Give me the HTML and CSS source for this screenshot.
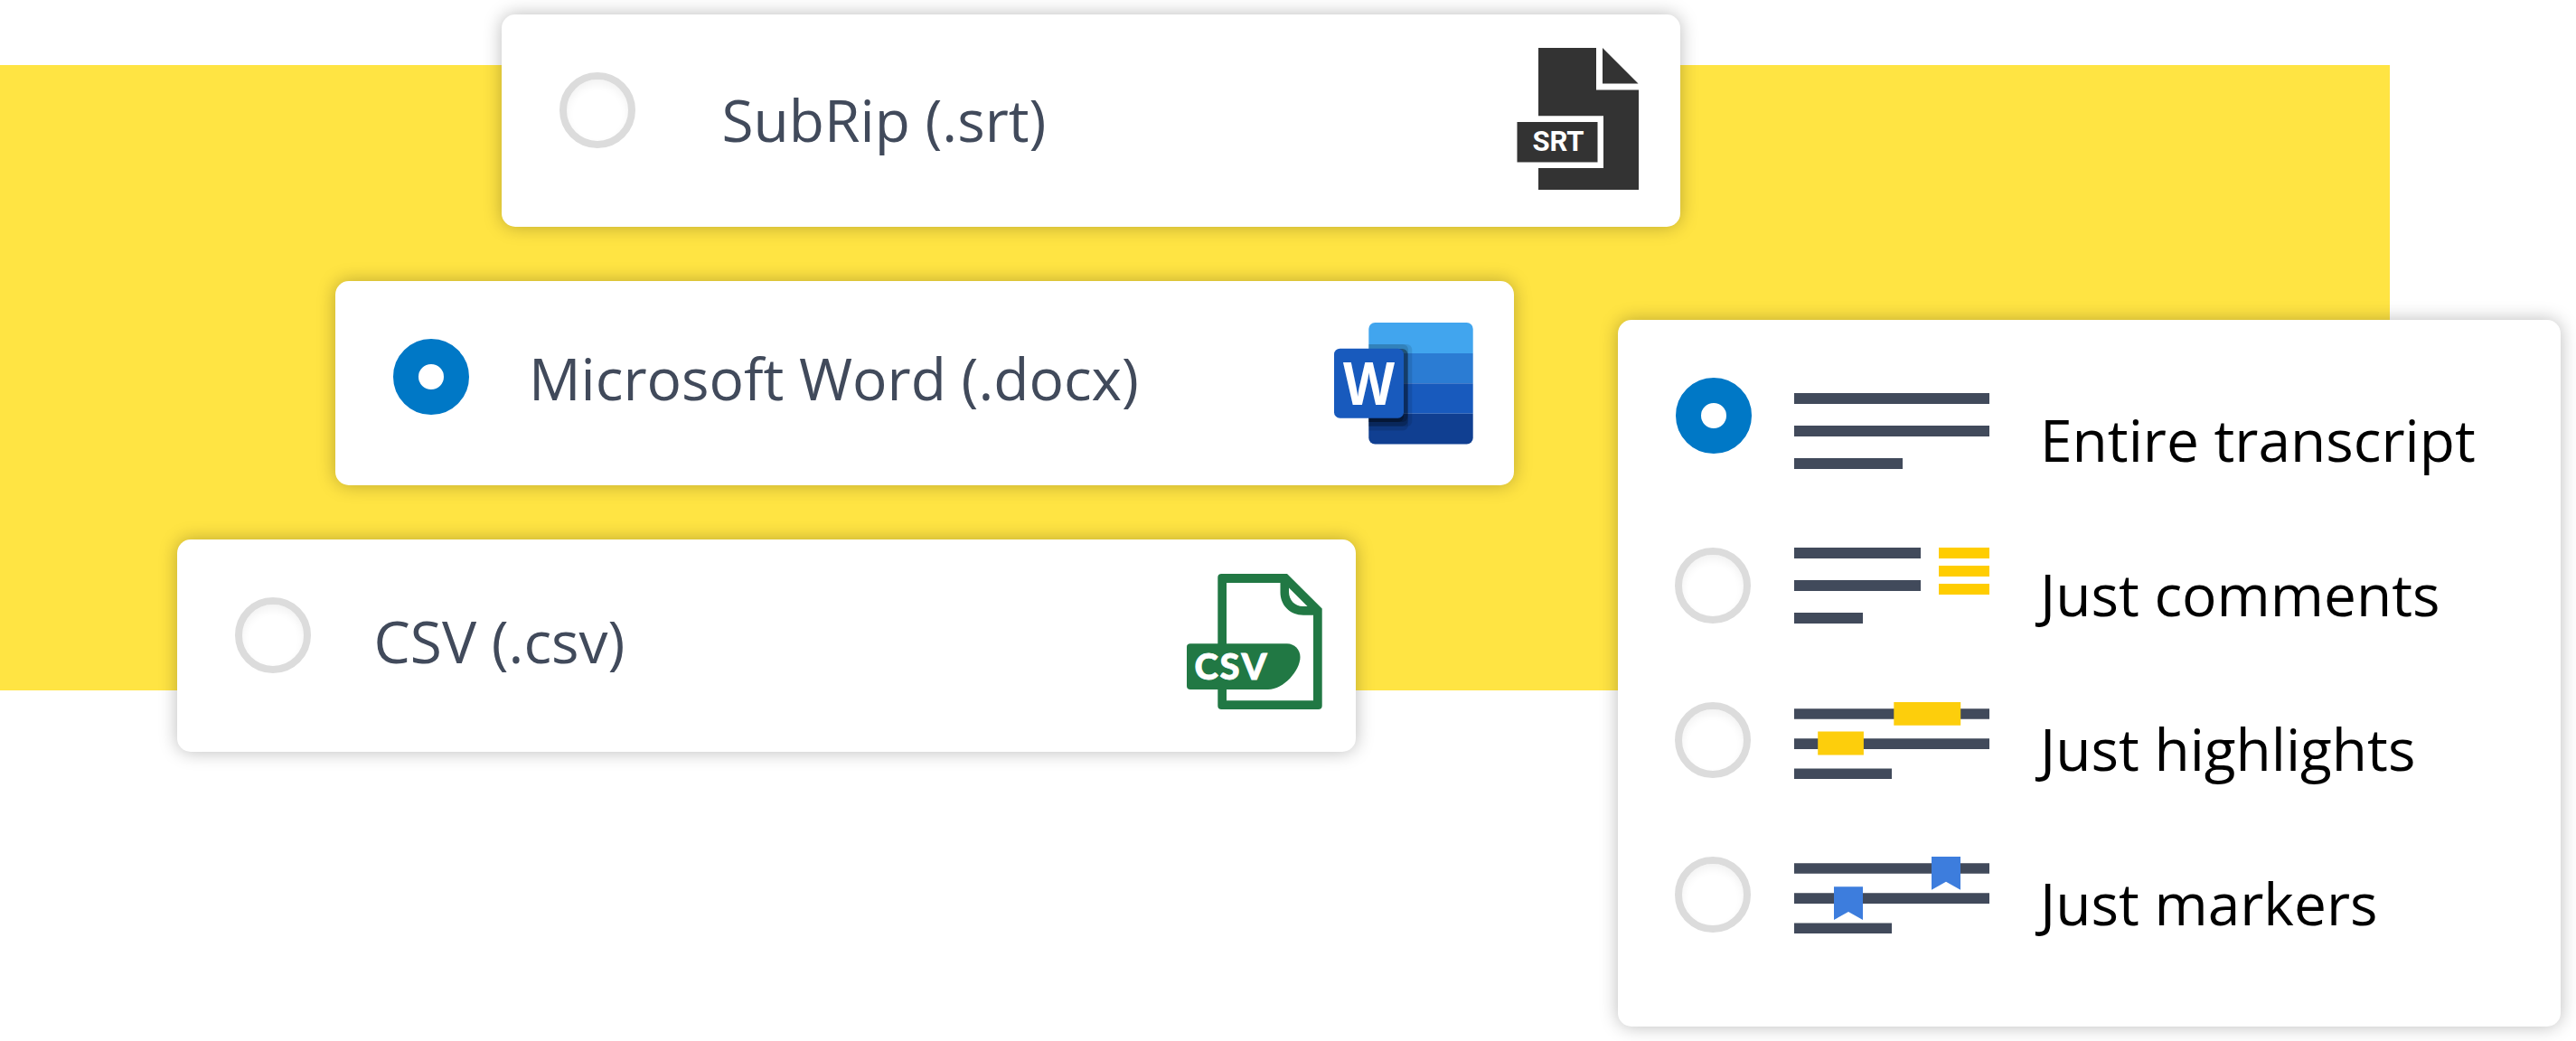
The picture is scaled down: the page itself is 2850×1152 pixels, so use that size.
FILE: index.html
```html
<!DOCTYPE html>
<html lang="en">
<head>
<meta charset="utf-8">
<title>Export options</title>
<link rel="stylesheet" href="styles.css">
</head>
<body>
<main class="stage">
  <div class="band"></div>
  <section class="formats">
    <div class="card card-srt">
      <span class="radio"></span>
      <span class="label">SubRip (.srt)</span>
      <svg class="file-icon" width="135" height="157" viewBox="0 0 135 157">
        <g fill="#333">
          <path d="M24 0H88V46.500H135V157H24V133H96V75.300H24Z"/>
          <path d="M95 0L134.500 39.500H95Z"/>
          <path d="M.5 82H89.500V126.500H.5Z"/>
        </g>
        <text class="srt-text" x="17.500" y="114" textLength="57" lengthAdjust="spacing">SRT</text>
      </svg>
    </div>
    <div class="card card-word">
      <span class="radio checked"></span>
      <span class="label">Microsoft Word (.docx)</span>
      <svg class="file-icon" width="154" height="135" viewBox="0 0 154 135">
        <defs><clipPath id="book"><rect x="38.300" width="115.400" height="134.500" rx="7"/></clipPath></defs>
        <g clip-path="url(#book)">
          <path fill="#41a5ee" d="M38 0h116v34H38z"/>
          <path fill="#2b7cd3" d="M38 34h116v33.300H38z"/>
          <path fill="#185abd" d="M38 67.300h116v33.400H38z"/>
          <path fill="#103f91" d="M38 100.700h116V135H38z"/>
          <rect x="9" y="24" width="77.300" height="91" rx="6" opacity=".1"/>
          <rect x="9" y="24" width="73" height="95.500" rx="6" opacity=".12"/>
          <rect x="5" y="29" width="76.500" height="85.500" rx="6" opacity=".2"/>
          <rect x="5" y="29" width="76.500" height="81" rx="6" opacity=".2"/>
          <rect x="3" y="29" width="74" height="81" rx="6" opacity=".25"/>
        </g>
        <rect y="28.700" width="77" height="77" rx="6.500" fill="#185abd"/>
        <text class="word-text" x="10" y="91" textLength="57" lengthAdjust="spacingAndGlyphs">W</text>
      </svg>
    </div>
    <div class="card card-csv">
      <span class="radio"></span>
      <span class="label">CSV (.csv)</span>
      <svg class="file-icon" width="150" height="150" viewBox="0 0 150 150">
        <path fill="#217844" fill-rule="evenodd" d="M38.500 0H111L149.700 38.500V146Q149.700 150 145.500 150H38.500Q34.300 150 34.300 146V4Q34.300 0 38.500 0ZM44 10V140.300H140V45.700H129C114 45.700 103.500 34.500 103.500 20.500V10ZM113 15.500V20C113 29 119.500 36 128.500 36H133.500Z"/>
        <path fill="#217844" d="M4 77.300H111C119 77.300 125.500 84 125.500 92C125.500 107 107 128 90 128H4Q0 128 0 124V81Q0 77.300 4 77.300Z"/>
        <text class="csv-text" x="8.500 36.500 60.500" y="117">CSV</text>
      </svg>
    </div>
  </section>
  <section class="panel">
    <div class="option first">
      <span class="radio checked"></span>
      <svg class="lines" width="216" height="98" fill="#414a5b"><path d="M0 0h216v12H0zM0 36h216v12H0zM0 72h120v12H0z"/></svg>
      <span class="label">Entire transcript</span>
    </div>
    <div class="option">
      <span class="radio"></span>
      <svg class="lines" width="216" height="98" fill="#414a5b"><path d="M0 0h140v12H0zM0 36h140v12H0zM0 72h76v12H0z"/><path fill="#ffcd00" d="M160 0h56v12h-56zM160 20h56v12h-56zM160 40h56v12h-56z"/></svg>
      <span class="label">Just comments</span>
    </div>
    <div class="option">
      <span class="radio"></span>
      <svg class="lines" width="216" height="98" fill="#414a5b"><path d="M0 7.200h216v11.600H0zM0 40.300h216v11.600H0zM0 73.500h108V85H0z"/><path fill="#fdce0c" d="M110.300 0h73.900v25.800h-73.900zM26.200 32.400h50.700v26.200H26.200z"/></svg>
      <span class="label">Just highlights</span>
    </div>
    <div class="option">
      <span class="radio"></span>
      <svg class="lines" width="216" height="98" fill="#414a5b"><path d="M0 7.200h216v11.600H0zM0 40.300h216v11.600H0zM0 73.500h108V85H0z"/><path fill="#3d7ddd" d="M152 0h32v36.800l-16-9-16 9zM44 33.200h32V70l-16-9-16 9z"/></svg>
      <span class="label">Just markers</span>
    </div>
  </section>
</main>
</body>
</html>
```

FILE: styles.css
```css
* { box-sizing: border-box; }

body {
  margin: 0;
  background: #fff;
  font-family: "Open Sans", "Noto Sans", sans-serif;
}

.stage {
  position: relative;
  display: flex;
  width: 2850px;
  height: 1152px;
  overflow: hidden;
}

/* yellow backdrop behind the cards */
.band {
  position: absolute;
  top: 72px;
  left: 0;
  width: 2644px;
  height: 692px;
  background: #ffe443;
}

.formats {
  position: relative;
  display: flex;
  flex-direction: column;
  gap: 59.7px;
  width: 1790px;
  padding-top: 16px;
}

.card,
.panel {
  background: #fff;
  border-radius: 15px;
  box-shadow: 0 0 20px rgba(0, 0, 0, .27);
}

.card {
  display: flex;
  align-items: flex-start;
  flex: none;
  width: 1304px;
  height: 235px;
  padding-left: 64px;
}

.card-srt { margin-left: 554.5px; }
.card-word { margin-left: 371px; height: 226.5px; }
.card-csv { margin-left: 195.5px; }

.radio {
  flex: none;
  width: 84px;
  height: 84px;
  border: 8px solid #dcdcdc;
  border-radius: 50%;
  box-shadow: inset 0 5px 10px rgba(0, 0, 0, .05);
}

.radio.checked {
  border: 28px solid #0078c6;
  box-shadow: none;
}

.card .radio { margin-top: 64px; }

.label {
  flex: none;
  font-size: 64px;
  line-height: 87px;
  white-space: nowrap;
}

.card .label { color: #414a5b; }
.card-srt .label { margin: 73px 0 0 96px; }
.card-word .label { margin: 64px 0 0 66px; }
.card-csv .label { margin: 69px 0 0 70px; }

.file-icon,
.lines {
  flex: none;
  display: block;
}

.file-icon { margin-left: auto; }
.card-srt .file-icon { margin-top: 37px; margin-right: 46px; }
.card-word .file-icon { margin-top: 46px; margin-right: 45px; }
.card-csv .file-icon { margin-top: 38px; margin-right: 37px; }

.srt-text { fill: #fff; font: 700 31px Roboto, sans-serif; }
.word-text { fill: #fff; font: 700 67px "Open Sans", sans-serif; }
.csv-text {
  fill: #fff;
  stroke: #fff;
  stroke-width: .8px;
  font: 900 40px Lato, sans-serif;
}

.panel {
  position: relative;
  flex: none;
  width: 1043px;
  height: 782.500px;
  margin-top: 353.500px;
  padding: 81.500px 0 0 63px;
}

.option {
  display: flex;
  align-items: flex-start;
  height: 171px;
}

.option .lines { margin-left: 48px; }
.option .label { margin: 8px 0 0 56px; color: #000; }
.option.first .radio { margin: -17.500px -1px 0 1px; }
```
